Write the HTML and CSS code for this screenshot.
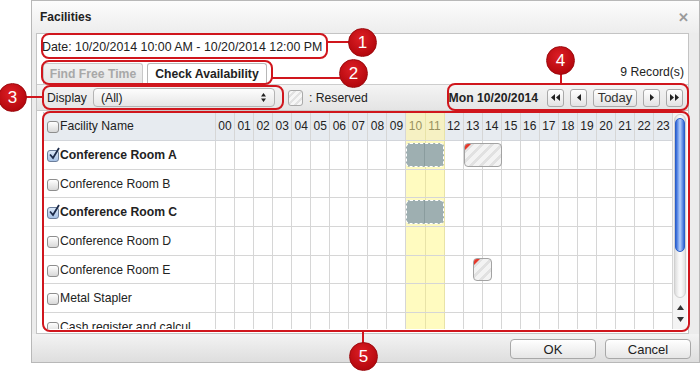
FILE: index.html
```html
<!DOCTYPE html>
<html>
<head>
<meta charset="utf-8">
<link rel="stylesheet" href="styles.css">
</head>
<body>
<div class="dialog">
  <div class="titlebar"><span class="title">Facilities</span><span class="close">&#x2715;</span></div>
  <div class="panel">
    <div class="date-row">Date: 10/20/2014 10:00 AM - 10/20/2014 12:00 PM</div>
    <div class="tab-row">
      <div class="tabs"><span class="tab">Find Free Time</span><span class="tab active">Check Availability</span></div>
      <span class="records">9 Record(s)</span>
    </div>
    <div class="toolbar">
      <span class="lbl">Display</span>
      <div class="select"><span>(All)</span><svg width="5" height="9" viewBox="0 0 5 9"><path d="M0 3.6L2.5 0L5 3.6Z M0 5.4L2.5 9L5 5.4Z" fill="#222"/></svg></div>
      <span class="swatch"></span>
      <span class="legend">: Reserved</span>
      <div class="nav">
        <span class="day">Mon 10/20/2014</span>
        <span class="nbtn"><svg width="9" height="7" viewBox="0 0 9 7"><path d="M4 0L0 3.5L4 7Z M9 0L5 3.5L9 7Z" fill="#222"/></svg></span>
        <span class="nbtn"><svg width="4" height="7" viewBox="0 0 4 7"><path d="M4 0L0 3.5L4 7Z" fill="#222"/></svg></span>
        <span class="nbtn today">Today</span>
        <span class="nbtn"><svg width="4" height="7" viewBox="0 0 4 7"><path d="M0 0L4 3.5L0 7Z" fill="#222"/></svg></span>
        <span class="nbtn"><svg width="9" height="7" viewBox="0 0 9 7"><path d="M0 0L4 3.5L0 7Z M5 0L9 3.5L5 7Z" fill="#222"/></svg></span>
      </div>
    </div>
    <div class="grid-wrap">
      <div class="table">
        <div class="row head">
          <div class="name"><span class="cb"></span>Facility Name</div>
          <div class="hours"><span>00</span><span>01</span><span>02</span><span>03</span><span>04</span><span>05</span><span>06</span><span>07</span><span>08</span><span>09</span><span class="hl">10</span><span class="hl">11</span><span>12</span><span>13</span><span>14</span><span>15</span><span>16</span><span>17</span><span>18</span><span>19</span><span>20</span><span>21</span><span>22</span><span>23</span></div>
        </div>
        <div class="row">
          <div class="name sel"><span class="cb on"><svg viewBox="0 0 12 14" width="12" height="14"><path d="M2 7.5L5 11L11 1" fill="none" stroke="#1c2b4a" stroke-width="1.8"/></svg></span>Conference Room A</div>
          <div class="hours"><span></span><span></span><span></span><span></span><span></span><span></span><span></span><span></span><span></span><span></span><span class="hl"></span><span class="hl"></span><span></span><span></span><span></span><span></span><span></span><span></span><span></span><span></span><span></span><span></span><span></span><span></span>
            <div class="ev mine" style="left:calc(100% * 10 / 24); width:calc(100% * 2 / 24)"></div>
            <div class="ev res" style="left:calc(100% * 13 / 24); width:calc(100% * 2 / 24)"></div>
          </div>
        </div>
        <div class="row">
          <div class="name"><span class="cb"></span>Conference Room B</div>
          <div class="hours"><span></span><span></span><span></span><span></span><span></span><span></span><span></span><span></span><span></span><span></span><span class="hl"></span><span class="hl"></span><span></span><span></span><span></span><span></span><span></span><span></span><span></span><span></span><span></span><span></span><span></span><span></span></div>
        </div>
        <div class="row">
          <div class="name sel"><span class="cb on"><svg viewBox="0 0 12 14" width="12" height="14"><path d="M2 7.5L5 11L11 1" fill="none" stroke="#1c2b4a" stroke-width="1.8"/></svg></span>Conference Room C</div>
          <div class="hours"><span></span><span></span><span></span><span></span><span></span><span></span><span></span><span></span><span></span><span></span><span class="hl"></span><span class="hl"></span><span></span><span></span><span></span><span></span><span></span><span></span><span></span><span></span><span></span><span></span><span></span><span></span>
            <div class="ev mine" style="left:calc(100% * 10 / 24); width:calc(100% * 2 / 24)"></div>
          </div>
        </div>
        <div class="row">
          <div class="name"><span class="cb"></span>Conference Room D</div>
          <div class="hours"><span></span><span></span><span></span><span></span><span></span><span></span><span></span><span></span><span></span><span></span><span class="hl"></span><span class="hl"></span><span></span><span></span><span></span><span></span><span></span><span></span><span></span><span></span><span></span><span></span><span></span><span></span></div>
        </div>
        <div class="row">
          <div class="name"><span class="cb"></span>Conference Room E</div>
          <div class="hours"><span></span><span></span><span></span><span></span><span></span><span></span><span></span><span></span><span></span><span></span><span class="hl"></span><span class="hl"></span><span></span><span></span><span></span><span></span><span></span><span></span><span></span><span></span><span></span><span></span><span></span><span></span>
            <div class="ev res" style="left:calc(100% * 13.5 / 24); width:calc(100% * 1 / 24)"></div>
          </div>
        </div>
        <div class="row">
          <div class="name"><span class="cb"></span>Metal Stapler</div>
          <div class="hours"><span></span><span></span><span></span><span></span><span></span><span></span><span></span><span></span><span></span><span></span><span class="hl"></span><span class="hl"></span><span></span><span></span><span></span><span></span><span></span><span></span><span></span><span></span><span></span><span></span><span></span><span></span></div>
        </div>
        <div class="row">
          <div class="name"><span class="cb"></span>Cash register and calcul</div>
          <div class="hours"><span></span><span></span><span></span><span></span><span></span><span></span><span></span><span></span><span></span><span></span><span class="hl"></span><span class="hl"></span><span></span><span></span><span></span><span></span><span></span><span></span><span></span><span></span><span></span><span></span><span></span><span></span></div>
        </div>
      </div>
      <div class="scrollbar">
        <div class="sb-track"><div class="sb-thumb"></div></div>
        <div class="sb-arrows">
          <svg width="7" height="5" viewBox="0 0 7 5"><path d="M0 5L3.5 0L7 5Z" fill="#333"/></svg>
          <svg width="7" height="5" viewBox="0 0 7 5"><path d="M0 0L3.5 5L7 0Z" fill="#333"/></svg>
        </div>
      </div>
    </div>
  </div>
  <div class="footer"><span class="btn">OK</span><span class="btn">Cancel</span></div>
</div>

<div class="annot">
  <div class="box b1"></div>
  <div class="box b2"></div>
  <div class="box b3"></div>
  <div class="box b4"></div>
  <div class="box b5"></div>
  <div class="ln l1"></div>
  <div class="ln l2"></div>
  <div class="ln l3"></div>
  <div class="ln l4"></div>
  <div class="ln l5"></div>
  <div class="badge n1">1</div>
  <div class="badge n2">2</div>
  <div class="badge n3">3</div>
  <div class="badge n4">4</div>
  <div class="badge n5">5</div>
</div>
</body>
</html>
```

FILE: styles.css
```css
* { box-sizing: border-box; }
html, body { margin: 0; padding: 0; }
body {
  width: 700px;
  height: 372px;
  background: #fff;
  font-family: "Liberation Sans", Arial, sans-serif;
  font-size: 12.2px;
  color: #222;
  position: relative;
  overflow: hidden;
}

.dialog {
  margin-left: 31px;
  width: 669px;
  height: 363px;
  border: 1px solid #b8b8b8;
  background: #ececec;
  display: flex;
  flex-direction: column;
}

.titlebar {
  height: 32px;
  flex: none;
  display: flex;
  align-items: center;
  justify-content: space-between;
  padding: 0 10px 0 8px;
  background: linear-gradient(#fcfcfc, #ededed);
}
.title { font-weight: bold; font-size: 12px; }
.close { color: #9a9a9a; font-size: 13px; font-weight: bold; }

.panel {
  margin-left: 4px;
  width: 653px;
  height: 301px;
  flex: none;
  border: 1px solid #c4c4c4;
  background: #fff;
  display: flex;
  flex-direction: column;
}

.date-row {
  height: 26px;
  line-height: 27px;
  padding-left: 5px;
  flex: none;
  font-size: 12.4px;
}

.tab-row {
  height: 24px;
  flex: none;
  display: flex;
  align-items: flex-end;
  justify-content: space-between;
  padding: 0 4px 0 6px;
}
.tabs { display: flex; gap: 4px; }
.tab {
  height: 21px;
  padding: 0 4px;
  line-height: 20px;
  font-weight: bold;
  color: #a8a8a8;
  background: linear-gradient(#f2f2f2, #e6e6e6);
  border: 1px solid #c8c8c8;
  border-bottom: none;
  border-radius: 3px 3px 0 0;
  white-space: nowrap;
}
.tab.active { color: #222; background: #fff; border-color: #b8b8b8; width: 120px; text-align: center; }
.tab:first-child { width: 100px; text-align: center; }
.records { align-self: center; padding-top: 0; }

.toolbar {
  height: 27px;
  flex: none;
  display: flex;
  align-items: center;
  padding: 0 5px 0 10px;
  background: linear-gradient(#f4f4f4, #e4e4e4);
  border-top: 1px solid #cdcdcd;
  border-bottom: 1px solid #c8c8c8;
}
.lbl { margin-right: 6px; }
.select {
  width: 182px;
  height: 19px;
  display: flex;
  align-items: center;
  justify-content: space-between;
  padding: 0 8px 0 7px;
  border: 1px solid #b4b4b4;
  border-radius: 4px;
  background: linear-gradient(#fdfdfd, #e6e6e6);
}
.swatch {
  width: 15px;
  height: 16px;
  margin-left: 13px;
  border: 1px solid #a9a9a9;
  border-radius: 3px;
  background: repeating-linear-gradient(135deg, #f6f6f6 0 3px, #e2e2e2 3px 5px);
}
.legend { margin-left: 6px; }

.nav { margin-left: auto; display: flex; align-items: center; gap: 6px; }
.day { font-weight: bold; margin-right: 3px; }
.nbtn {
  height: 18px;
  width: 17px;
  display: flex;
  align-items: center;
  justify-content: center;
  border: 1px solid #a9a9a9;
  border-radius: 3px;
  background: linear-gradient(#ffffff, #e3e3e3);
}
.nbtn.today { width: 44px; font-size: 13px; color: #333; }

.grid-wrap {
  margin: 1px 0 0 6px;
  width: 644px;
  height: 217px;
  flex: none;
  display: flex;
  border-left: 1px solid #c8c8c8;
}
.table { width: 629px; flex: none; overflow: hidden; }
.row {
  height: 28.7px;
  display: flex;
  border-bottom: 1px solid #d6d6d6;
}
.row.head { height: 29px; background: #e7ebf0; border-bottom-color: #d2d5da; }
.name {
  width: 172px;
  flex: none;
  display: flex;
  align-items: center;
  gap: 1px;
  padding-left: 3px;
  border-right: 1px solid #d6d6d6;
  white-space: nowrap;
  overflow: hidden;
}
.name.sel { font-weight: bold; }
.hours { flex: 1; display: flex; position: relative; font-size: 12px; }
.hours > span {
  flex: 1;
  border-right: 1px solid #d6d6d6;
  display: flex;
  align-items: center;
  justify-content: center;
}
.hours > span.hl { background: #fffbc0; border-right-color: #e8e3a8; }
.head .hours > span.hl { background: #f6f1c3; color: #9a9260; }

.cb {
  width: 12px;
  height: 12px;
  flex: none;
  position: relative;
  border: 1px solid #8e8e8e;
  border-radius: 3px;
  background: linear-gradient(#ffffff, #d8d8d8);
  margin-top: 2px;
}
.cb.on { background: linear-gradient(#dbe8f8, #a7c2e6); border-color: #6c7f9c; }
.cb svg { position: absolute; left: 0; top: -4px; }

.ev { position: absolute; top: 2px; bottom: 2px; border-radius: 4px; }
.ev.mine {
  border: 1px dashed #ffffff;
  background: #9eafb1 linear-gradient(to right, transparent calc(50% - 0.5px), #8a9c9e calc(50% - 0.5px), #8a9c9e calc(50% + 0.5px), transparent calc(50% + 0.5px));
}
.ev.res {
  border: 1px solid #a3a3a3;
  background: repeating-linear-gradient(135deg, #f3f3f3 0 4px, #e1e1e1 4px 7px);
  overflow: hidden;
}
.ev.res::before {
  content: "";
  position: absolute;
  left: 0;
  top: 0;
  border-top: 6px solid #e5382b;
  border-right: 6px solid transparent;
}

.scrollbar {
  width: 14px;
  flex: none;
  display: flex;
  flex-direction: column;
  background: #f4f4f4;
  padding: 2px 1px 1px 1px;
}
.sb-track {
  flex: 1;
  border-radius: 6px;
  background: linear-gradient(to right, #dcdcdc, #f8f8f8 40%, #fbfbfb 60%, #e2e2e2);
  border: 1px solid #d0d0d0;
  padding-top: 3px;
}
.sb-thumb {
  height: 134px;
  border-radius: 6px;
  border: 1px solid #2b5fc9;
  background: linear-gradient(to right, #2e62d4, #7ea6ef 30%, #b7d0fa 50%, #7ea6ef 70%, #3567d4);
}
.sb-arrows {
  height: 30px;
  flex: none;
  display: flex;
  flex-direction: column;
  align-items: center;
  justify-content: space-around;
  padding: 3px 0 2px;
}

.footer {
  flex: 1;
  display: flex;
  justify-content: flex-end;
  align-items: flex-start;
  gap: 9px;
  padding: 5px 8px 0 0;
  background: linear-gradient(#f3f3f3, #dedede);
}
.btn {
  width: 86px;
  height: 20px;
  border: 1px solid #a8a8a8;
  border-radius: 4px;
  background: linear-gradient(#ffffff, #e6e6e6);
  display: flex;
  align-items: center;
  justify-content: center;
  font-size: 13px;
  color: #222;
}

.annot { position: absolute; left: 0; top: 0; width: 700px; height: 372px; }
.box { position: absolute; border: 2px solid #d0161d; border-radius: 8px; }
.b1 { left: 41px; top: 33px; width: 287px; height: 26px; }
.b2 { left: 41px; top: 60px; width: 232px; height: 25px; }
.b3 { left: 42px; top: 85px; width: 242px; height: 25px; }
.b4 { left: 447px; top: 83px; width: 242px; height: 28px; }
.b5 { left: 42px; top: 111px; width: 648px; height: 221px; }
.ln { position: absolute; background: #d0161d; }
.l1 { left: 327px; top: 41px; width: 22px; height: 2px; }
.l2 { left: 272px; top: 77px; width: 68px; height: 2px; }
.l3 { left: 24px; top: 96px; width: 19px; height: 2px; }
.l4 { left: 560px; top: 72px; width: 2px; height: 12px; }
.l5 { left: 362px; top: 331px; width: 2px; height: 12px; }
.badge {
  position: absolute;
  width: 29px;
  height: 29px;
  border-radius: 50%;
  background: radial-gradient(circle at 45% 35%, #dd1f25, #b4070d 75%);
  border: 1px solid #9c0a0e;
  color: #fff;
  font-size: 17px;
  line-height: 27px;
  text-align: center;
}
.n1 { left: 348px; top: 28px; }
.n2 { left: 339px; top: 59px; }
.n3 { left: -2px; top: 83px; }
.n4 { left: 546px; top: 46px; }
.n5 { left: 349px; top: 342px; }
```
